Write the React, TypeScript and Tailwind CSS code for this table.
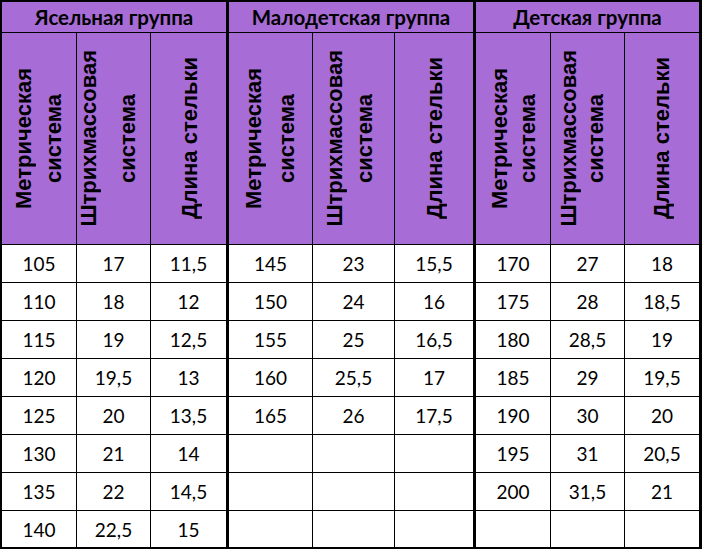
import React from "react";

const g1 = [
  ["105", "17", "11,5"],
  ["110", "18", "12"],
  ["115", "19", "12,5"],
  ["120", "19,5", "13"],
  ["125", "20", "13,5"],
  ["130", "21", "14"],
  ["135", "22", "14,5"],
  ["140", "22,5", "15"],
];
const g2 = [
  ["145", "23", "15,5"],
  ["150", "24", "16"],
  ["155", "25", "16,5"],
  ["160", "25,5", "17"],
  ["165", "26", "17,5"],
  ["", "", ""],
  ["", "", ""],
  ["", "", ""],
];
const g3 = [
  ["170", "27", "18"],
  ["175", "28", "18,5"],
  ["180", "28,5", "19"],
  ["185", "29", "19,5"],
  ["190", "30", "20"],
  ["195", "31", "20,5"],
  ["200", "31,5", "21"],
  ["", "", ""],
];

const headCells = [
  { lines: ["Метрическая", "система"], cls: "pl-[11px] gap-[8px] border-r" },
  { lines: ["Штрихмассовая", "система"], cls: "pl-[1px] gap-[17px] border-r" },
  { lines: ["Длина стельки"], cls: "pl-[28px] border-r-[3px]" },
  { lines: ["Метрическая", "система"], cls: "pl-[14px] gap-[11px] border-r" },
  { lines: ["Штрихмассовая", "система"], cls: "pl-[11px] gap-[8px] border-r" },
  { lines: ["Длина стельки"], cls: "pl-[29px] border-r-[3px]" },
  { lines: ["Метрическая", "система"], cls: "pl-[13px] gap-[6px] border-r" },
  { lines: ["Штрихмассовая", "система"], cls: "pl-[7px] gap-[5px] border-r" },
  { lines: ["Длина стельки"], cls: "pl-[26px]" },
];

const colBorder = [
  "border-r",
  "border-r",
  "border-r-[3px]",
  "border-r",
  "border-r",
  "border-r-[3px]",
  "border-r",
  "border-r",
  "",
];

export default function App() {
  const rows = g1.map((r, i) => [...r, ...g2[i], ...g3[i]]);
  return (
    <div className="w-[702px] h-[549px] bg-white border-l-2 border-t-2 border-b-2 border-r-[3px] border-black">
      <div className="grid grid-cols-[75px_74px_78px_84px_82px_81px_75px_74px_74px] grid-rows-[31px_212px_repeat(7,38px)_36px] h-full font-['Lato',sans-serif] text-black">
        {["Ясельная группа", "Малодетская группа", "Детская группа"].map((t, i) => (
          <div
            key={t}
            className={
              "col-span-3 flex items-center justify-center bg-[#a76cd5] border-b border-black font-bold text-[20.5px] " +
              (i < 2 ? "border-r-[3px]" : "")
            }
          >
            {t}
          </div>
        ))}
        {headCells.map((h, i) => (
          <div
            key={i}
            className={
              "flex items-center bg-[#a76cd5] border-b border-black font-['Liberation_Sans',sans-serif] font-bold text-[22px] " +
              h.cls
            }
          >
            {h.lines.map((l) => (
              <span
                key={l}
                className="[writing-mode:vertical-rl] rotate-180 leading-[22px] whitespace-nowrap text-center"
              >
                {l}
              </span>
            ))}
          </div>
        ))}
        {rows.map((r, ri) =>
          r.map((v, ci) => (
            <div
              key={ri + "-" + ci}
              className={
                "flex items-center justify-center border-black text-[19px] pt-[2px] " +
                colBorder[ci] +
                (ri < 7 ? " border-b" : "")
              }
            >
              {v}
            </div>
          ))
        )}
      </div>
    </div>
  );
}
